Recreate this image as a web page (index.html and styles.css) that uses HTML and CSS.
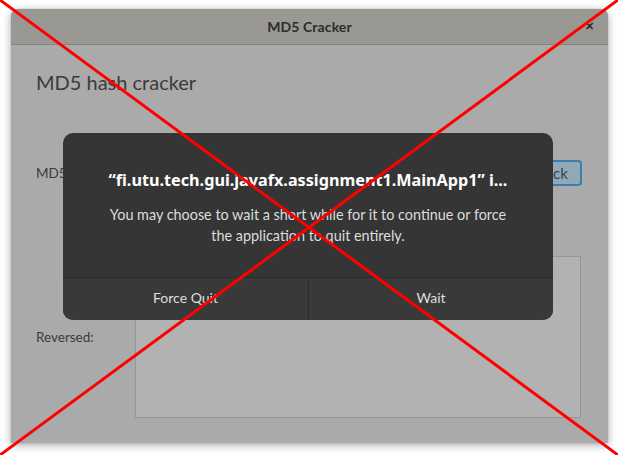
FILE: index.html
```html
<!DOCTYPE html>
<html lang="en">
<head>
<meta charset="utf-8">
<title>MD5 Cracker</title>
<link rel="stylesheet" href="styles.css">
</head>
<body>
<div class="stage">
  <div class="window">
    <div class="titlebar">
      <span class="title">MD5 Cracker</span>
      <span class="close">&#x2715;</span>
    </div>
    <div class="content">
      <h1 class="heading">MD5 hash cracker</h1>
      <div class="form">
        <span class="label">MD5 hash:</span>
        <div class="inputrow">
          <div class="field"></div>
          <div class="btn">Crack</div>
        </div>
        <span class="label">Reversed:</span>
        <div class="area"></div>
      </div>
    </div>

    <div class="dialog">
      <div class="dlg-body">
        <div class="dlg-title">“fi.utu.tech.gui.javafx.assignment1.MainApp1” i...</div>
        <div class="dlg-text">You may choose to wait a short while for it to continue or force the application to quit entirely.</div>
      </div>
      <div class="dlg-buttons">
        <div class="dlg-btn">Force Quit</div>
        <div class="dlg-btn">Wait</div>
      </div>
    </div>
  </div>

  <svg class="cross" width="618" height="455" viewBox="0 0 618 455">
    <line x1="0" y1="0" x2="618" y2="455" stroke="#ff0000" stroke-width="3"/>
    <line x1="618" y1="0" x2="0" y2="455" stroke="#ff0000" stroke-width="3"/>
  </svg>
</div>
</body>
</html>
```

FILE: styles.css
```css
* { box-sizing: border-box; }
html, body {
  margin: 0;
  padding: 0;
  background: #ffffff;
  width: 618px;
  height: 455px;
  overflow: hidden;
}
body {
  font-family: "Lato", "Noto Sans", sans-serif;
}
.stage {
  position: relative;
  width: 618px;
  height: 455px;
  padding: 9px 10px 0 11px;
}
.window {
  position: relative;
  width: 597px;
  height: 434px;
  background: #aaaaaa;
  border-radius: 8px 8px 0 0;
  box-shadow: 0 2px 9px rgba(0, 0, 0, 0.35), 0 0 1px rgba(0,0,0,0.4);
  display: flex;
  flex-direction: column;
}
.titlebar {
  position: relative;
  height: 36px;
  flex: none;
  background: #9a9893;
  border-bottom: 1px solid #86847f;
  border-radius: 8px 8px 0 0;
  display: flex;
  align-items: center;
  justify-content: center;
}
.title {
  font-size: 14px;
  font-weight: 700;
  color: #2c2c2c;
  letter-spacing: 0.1px;
}
.close {
  position: absolute;
  right: 14px;
  top: 10px;
  font-size: 11px;
  font-weight: 700;
  color: #2c2c2c;
}
.content {
  flex: 1;
  padding: 25px 26px 25px 25px;
  display: flex;
  flex-direction: column;
}
.heading {
  margin: 0;
  font-size: 20px;
  font-weight: 400;
  color: #3b3b3b;
  line-height: 24px;
}
.form {
  margin-top: 66px;
  display: grid;
  grid-template-columns: 99px 1fr;
  grid-template-rows: 26px 162px;
  row-gap: 70px;
  align-items: center;
}
.label {
  font-size: 13.5px;
  color: #3b3b3b;
}
.inputrow {
  display: flex;
  gap: 8px;
  height: 26px;
}
.field {
  flex: 1;
  background: #b2b2b2;
  border: 1px solid #969696;
  border-radius: 3px;
}
.btn {
  width: 66px;
  height: 26px;
  border: 2px solid #3a7db0;
  border-radius: 4px;
  background: #91a8b5;
  color: #38464f;
  font-size: 15px;
  display: flex;
  align-items: center;
  justify-content: center;
}
.area {
  height: 162px;
  margin-right: 1px;
  background: #b2b2b2;
  border: 1px solid #969696;
}
.dialog {
  position: absolute;
  left: 52px;
  top: 124px;
  width: 490px;
  height: 187px;
  background: #353535;
  border-radius: 10px;
  display: flex;
  flex-direction: column;
  overflow: hidden;
  color: #e4e4e4;
}
.dlg-body {
  flex: 1;
  padding: 36px 10px 0;
  text-align: center;
}
.dlg-title {
  font-family: "Noto Sans", "Lato", sans-serif;
  font-size: 16.2px;
  font-weight: 700;
  color: #ffffff;
  line-height: 22px;
  white-space: nowrap;
}
.dlg-text {
  margin: 13px auto 0;
  width: 404px;
  font-size: 14.4px;
  line-height: 21px;
  color: #dcdcdc;
}
.dlg-buttons {
  flex: none;
  height: 43px;
  display: grid;
  grid-template-columns: 1fr 1fr;
  border-top: 1px solid #2a2a2a;
  background: #393939;
}
.dlg-btn {
  display: flex;
  align-items: center;
  justify-content: center;
  padding-bottom: 3px;
  font-size: 14px;
  color: #dedede;
}
.dlg-btn + .dlg-btn {
  border-left: 1px solid #2a2a2a;
}
.cross {
  position: absolute;
  left: 0;
  top: 0;
  pointer-events: none;
}
```
